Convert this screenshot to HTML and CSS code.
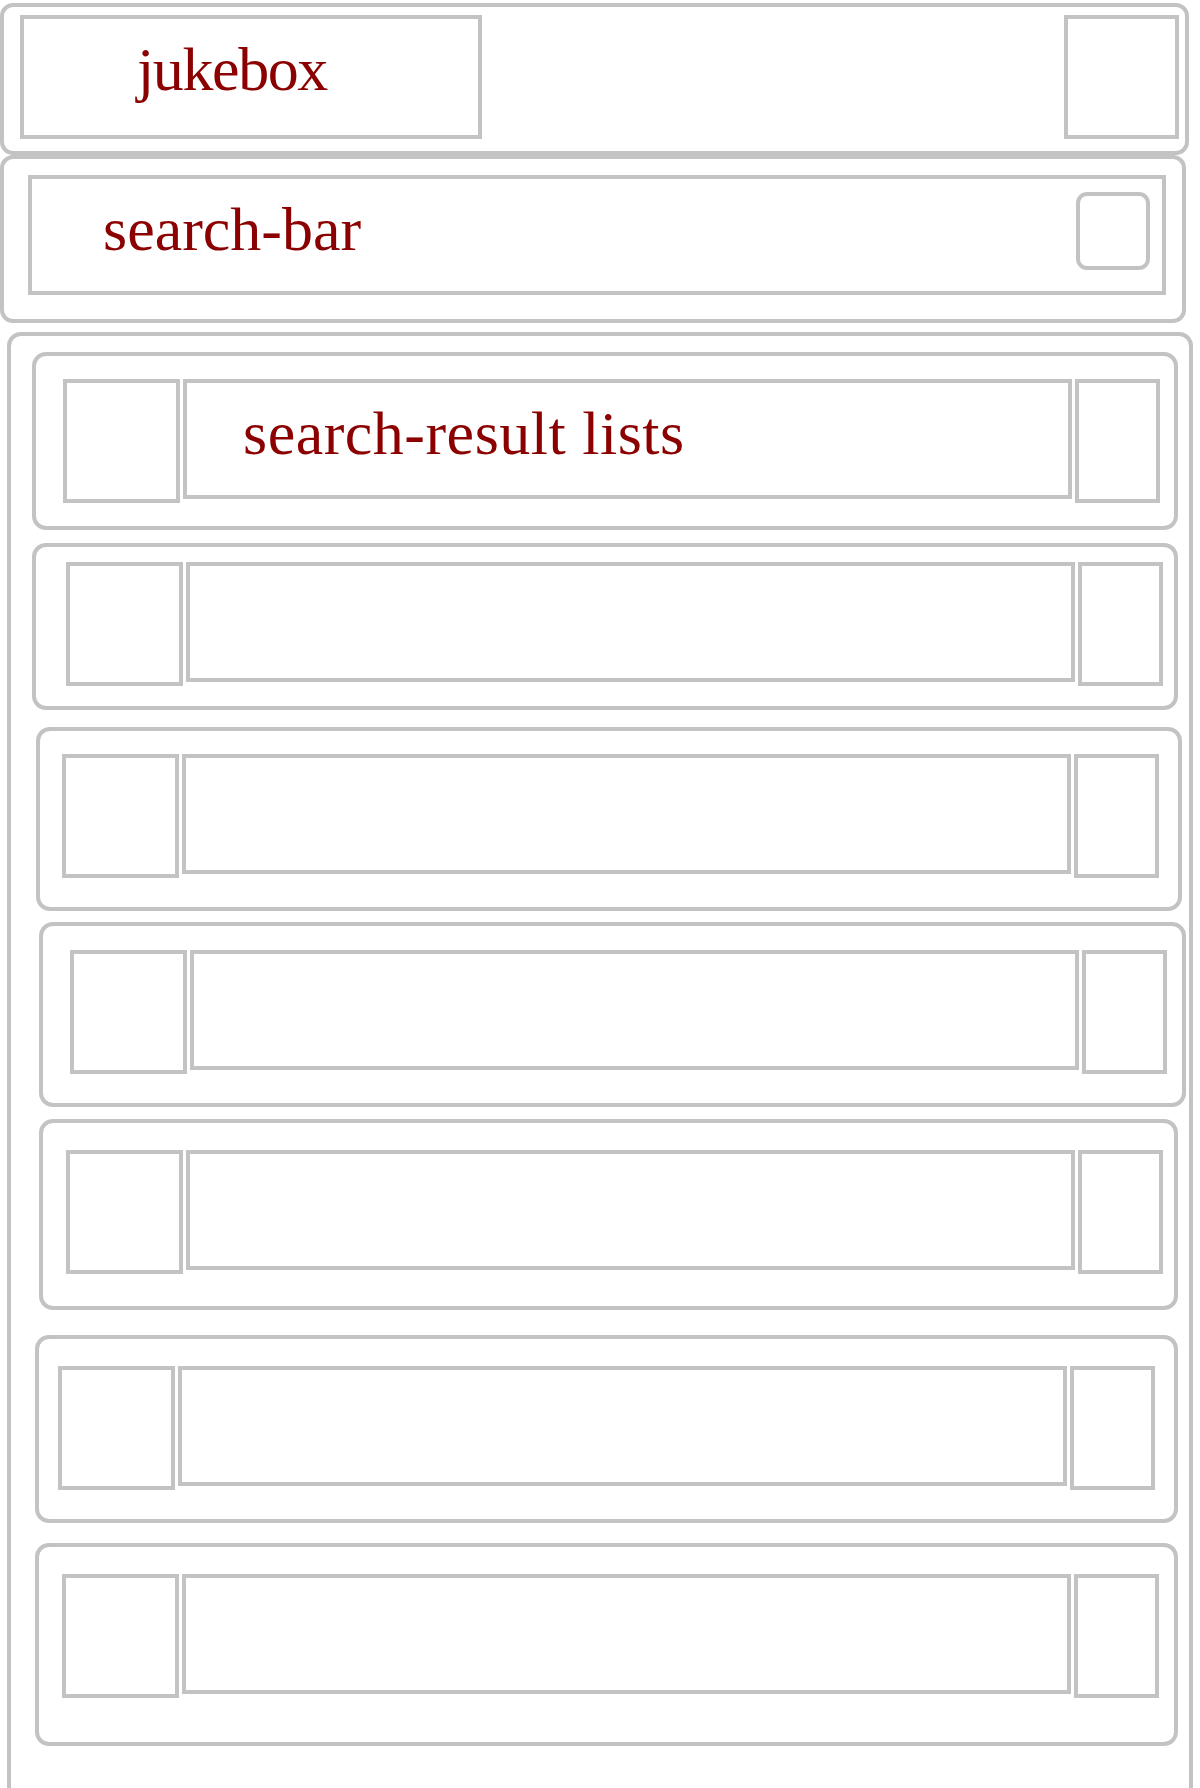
FILE: index.html
```html
<!DOCTYPE html>
<html lang="en">
<head>
<meta charset="utf-8">
<title>jukebox</title>
<link rel="stylesheet" href="styles.css">
</head>
<body>
<div class="page">
  <header class="app-header frame">
    <div class="title-box frame"><span class="label title-label">jukebox</span></div>
    <div class="menu-box frame"></div>
  </header>
  <section class="search-panel frame">
    <div class="search-field frame">
      <span class="label search-label">search-bar</span>
      <div class="search-btn frame"></div>
    </div>
  </section>
  <section class="results frame">
    <div class="row frame">
      <div class="thumb frame"></div>
      <div class="info frame"><span class="label result-label">search-result lists</span></div>
      <div class="action frame"></div>
    </div>
    <div class="row frame">
      <div class="thumb frame"></div>
      <div class="info frame"></div>
      <div class="action frame"></div>
    </div>
    <div class="row frame">
      <div class="thumb frame"></div>
      <div class="info frame"></div>
      <div class="action frame"></div>
    </div>
    <div class="row frame">
      <div class="thumb frame"></div>
      <div class="info frame"></div>
      <div class="action frame"></div>
    </div>
    <div class="row frame">
      <div class="thumb frame"></div>
      <div class="info frame"></div>
      <div class="action frame"></div>
    </div>
    <div class="row frame">
      <div class="thumb frame"></div>
      <div class="info frame"></div>
      <div class="action frame"></div>
    </div>
    <div class="row frame">
      <div class="thumb frame"></div>
      <div class="info frame"></div>
      <div class="action frame"></div>
    </div>
  </section>
</div>
</body>
</html>
```
FILE: styles.css
```css
* {
  box-sizing: border-box;
}

html,
body {
  margin: 0;
  padding: 0;
  background: #ffffff;
}

body {
  font-family: "Liberation Serif", "Times New Roman", serif;
  color: #8b0000;
}

.page {
  width: 1200px;
  height: 1788px;
  overflow: hidden;
  display: flex;
  flex-direction: column;
  align-items: flex-start;
}

.frame {
  border: 4px solid #c3c3c3;
  flex-shrink: 0;
}

.label {
  display: block;
  font-size: 62px;
  line-height: 62px;
  white-space: nowrap;
}

.title-label {
  letter-spacing: -1.4px;
}

.result-label {
  letter-spacing: 0.5px;
}

/* header */
.app-header {
  margin-top: 3px;
  width: 1189px;
  height: 152px;
  border-radius: 13px;
  display: flex;
  justify-content: space-between;
  align-items: flex-start;
  padding: 8px 6px 0 16px;
}

.title-box {
  width: 462px;
  height: 124px;
  padding: 19px 0 0 113px;
}

.menu-box {
  width: 115px;
  height: 124px;
}

/* search */
.search-panel {
  width: 1186px;
  height: 168px;
  border-radius: 13px;
  padding: 16px 0 0 24px;
}

.search-field {
  width: 1138px;
  height: 120px;
  display: flex;
  align-items: flex-start;
  padding: 0 12px 0 71px;
}

.search-label {
  margin-top: 19px;
}

.search-btn {
  margin-left: auto;
  margin-top: 13px;
  width: 74px;
  height: 78px;
  border-radius: 11px;
}

/* results */
.results {
  margin: 9px 0 0 7px;
  width: 1186px;
  height: 1500px;
  border-radius: 14px;
  display: flex;
  flex-direction: column;
  align-items: flex-start;
}

.row {
  display: flex;
  align-items: flex-start;
  border-radius: 14px;
}

.thumb {
  width: 117px;
  height: 124px;
}

.info {
  width: 889px;
  height: 120px;
  margin-left: 3px;
  padding: 19px 0 0 56px;
}

.action {
  width: 85px;
  height: 124px;
  margin-left: 3px;
}

.row:nth-child(1) {
  margin: 16px 0 0 21px;
  width: 1146px;
  height: 178px;
  padding: 23px 0 0 27px;
}

.row:nth-child(2) {
  margin: 13px 0 0 21px;
  width: 1146px;
  height: 167px;
  padding: 15px 0 0 30px;
}

.row:nth-child(3) {
  margin: 17px 0 0 25px;
  width: 1146px;
  height: 184px;
  padding: 23px 0 0 22px;
}

.row:nth-child(4) {
  margin: 11px 0 0 28px;
  width: 1147px;
  height: 185px;
  padding: 24px 0 0 27px;
}

.row:nth-child(5) {
  margin: 12px 0 0 28px;
  width: 1139px;
  height: 191px;
  padding: 27px 0 0 23px;
}

.row:nth-child(6) {
  margin: 25px 0 0 24px;
  width: 1143px;
  height: 188px;
  padding: 27px 0 0 19px;
}

.row:nth-child(7) {
  margin: 20px 0 0 24px;
  width: 1143px;
  height: 203px;
  padding: 27px 0 0 23px;
}
```
